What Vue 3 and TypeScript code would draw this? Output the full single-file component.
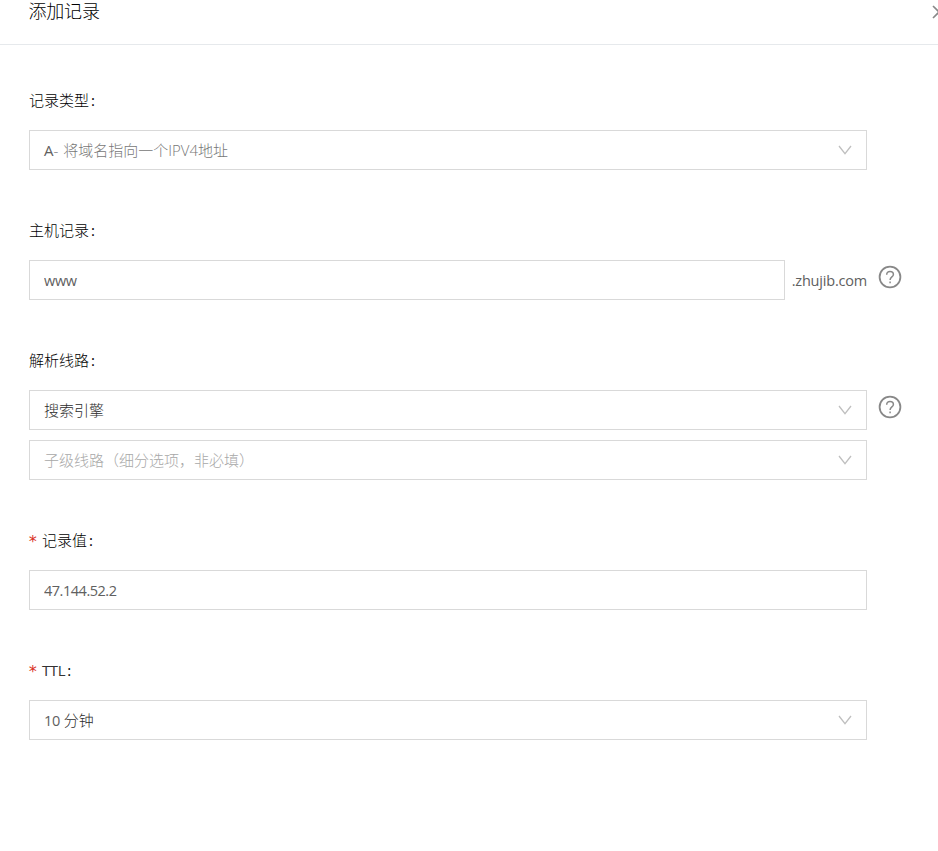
<script setup lang="ts">
import { ref } from 'vue'

const host = ref('www')
const recordValue = ref('47.144.52.2')
const domain = '.zhujib.com'
</script>

<template>
  <section class="drawer">
    <header class="header">
      <h1 class="title">添加记录</h1>
      <button class="close" aria-label="关闭">
        <svg width="14" height="14" viewBox="0 0 14 14"><path d="M1 1L13 13M13 1L1 13" /></svg>
      </button>
    </header>

    <form class="form" @submit.prevent>
      <div class="field">
        <div class="label">记录类型<span class="colon">:</span></div>
        <div class="row">
          <div class="control">
            <span class="text"><span class="code">A</span><span class="hint">- <span class="desc">将域名指向一个<span class="proto">IPV4</span>地址</span></span></span>
            <svg class="arrow" viewBox="0 0 14 10"><path d="M1 1L7 8.6L13 1" /></svg>
          </div>
        </div>
      </div>

      <div class="field">
        <div class="label">主机记录<span class="colon">:</span></div>
        <div class="row">
          <div class="host">
            <input v-model="host" class="control input www" />
            <span class="suffix">{{ domain }}</span>
          </div>
          <svg class="help" viewBox="0 0 24 24">
            <circle cx="12" cy="12" r="10.4" />
            <path d="M8.7 9.7C8.7 7.4 10.1 6.4 12 6.4C14 6.4 15.4 7.6 15.4 9.4C15.4 12 12.1 11.8 12.1 14.9" />
            <path d="M12.1 16.6V18.2" />
          </svg>
        </div>
      </div>

      <div class="field">
        <div class="label">解析线路<span class="colon">:</span></div>
        <div class="row">
          <div class="control">
            <span class="text">搜索引擎</span>
            <svg class="arrow" viewBox="0 0 14 10"><path d="M1 1L7 8.6L13 1" /></svg>
          </div>
          <svg class="help" viewBox="0 0 24 24">
            <circle cx="12" cy="12" r="10.4" />
            <path d="M8.7 9.7C8.7 7.4 10.1 6.4 12 6.4C14 6.4 15.4 7.6 15.4 9.4C15.4 12 12.1 11.8 12.1 14.9" />
            <path d="M12.1 16.6V18.2" />
          </svg>
        </div>
        <div class="row">
          <div class="control">
            <span class="text placeholder">子级线路（细分选项，非必填）</span>
            <svg class="arrow" viewBox="0 0 14 10"><path d="M1 1L7 8.6L13 1" /></svg>
          </div>
        </div>
      </div>

      <div class="field">
        <div class="label"><span class="star">*</span>记录值<span class="colon">:</span></div>
        <div class="row">
          <input v-model="recordValue" class="control input ip" />
        </div>
      </div>

      <div class="field">
        <div class="label"><span class="star">*</span><span class="ttl">TTL</span><span class="colon">:</span></div>
        <div class="row">
          <div class="control">
            <span class="text"><span class="num">10</span> 分钟</span>
            <svg class="arrow" viewBox="0 0 14 10"><path d="M1 1L7 8.6L13 1" /></svg>
          </div>
        </div>
      </div>
    </form>
  </section>
</template>

<style>
body {
  margin: 0;
  background: #fff;
  overflow: hidden;
}
</style>

<style scoped>
.drawer {
  height: 851px;
  overflow: hidden;
  color: #000;
  font: 300 15px/20px "Open Sans", "Noto Sans CJK SC", sans-serif;
}
.header {
  display: flex;
  justify-content: space-between;
  box-sizing: border-box;
  height: 45px;
  padding-left: 28.5px;
  border-bottom: 1px solid #e6e9ec;
}
.title {
  margin: 0;
  font-size: 18px;
  line-height: 22px;
  font-weight: 300;
  letter-spacing: -0.2px;
}
.close {
  width: 14px;
  height: 14px;
  margin: 5px -8px 0 0;
  padding: 0;
  border: 0;
  background: none;
}
.close svg {
  display: block;
  fill: none;
  stroke: #888;
  stroke-width: 1.6;
}
.form {
  display: flex;
  flex-direction: column;
  gap: 40px;
  padding: 35px 0 0 29px;
}
.field {
  display: flex;
  flex-direction: column;
  gap: 10px;
}
.label {
  display: flex;
  height: 40px;
  line-height: 40px;
}
.colon {
  margin-left: 2px;
  font-weight: 400;
}
.star {
  width: 14px;
  margin-left: -1px;
  padding-top: 2px;
  font-family: "DejaVu Sans Mono", monospace;
  font-size: 16px;
  font-weight: 400;
  color: #d93026;
}
.ttl {
  font-weight: 400;
  color: #333;
  letter-spacing: -0.4px;
}
.row {
  display: flex;
  gap: 11px;
}
.control {
  display: flex;
  align-items: center;
  justify-content: space-between;
  box-sizing: border-box;
  width: 838px;
  height: 40px;
  padding: 0 14px;
  border: 1px solid #d9d9d9;
  border-radius: 0;
  background: #fff;
  color: #2c2c2c;
}
.input {
  font: inherit;
  font-weight: 400;
  font-size: 14.5px;
  color: #606060;
  outline: none;
}
.www {
  letter-spacing: -0.3px;
}
.ip {
  letter-spacing: -0.48px;
}
.text {
  white-space: pre;
}
.code {
  font-weight: 400;
  color: #606060;
}
.hint {
  color: #777;
}
.desc {
  margin-left: 1px;
}
.num {
  font-weight: 400;
  font-size: 14.5px;
  letter-spacing: -0.4px;
  color: #606060;
}
.placeholder {
  color: #a8a8a8;
}
.arrow {
  width: 14px;
  height: 10px;
  fill: none;
  stroke: #bfbfbf;
  stroke-width: 1.3;
}
.host {
  display: flex;
  justify-content: space-between;
  align-items: center;
  width: 838px;
}
.host .control {
  width: 756px;
}
.suffix {
  padding-top: 1px;
  color: #606060;
  font-weight: 400;
  font-size: 14.5px;
  letter-spacing: -0.2px;
}
.help {
  width: 24px;
  height: 24px;
  margin-top: 5px;
  fill: none;
  stroke: #888;
  stroke-width: 1.8;
}
.help path {
  stroke-width: 1.5;
}
</style>
